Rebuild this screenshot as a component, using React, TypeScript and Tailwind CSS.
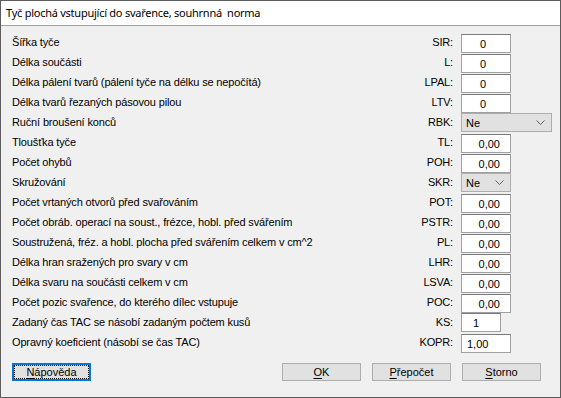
import React from "react";

type Row = {
  label: string;
  code: string;
  kind: "c" | "r" | "combo" | "comboSmall" | "ks" | "kopr";
  value: string;
};

const rows: Row[] = [
  { label: "Šířka tyče", code: "SIR:", kind: "c", value: "0" },
  { label: "Délka součásti", code: "L:", kind: "c", value: "0" },
  { label: "Délka pálení tvarů (pálení tyče na délku se nepočítá)", code: "LPAL:", kind: "c", value: "0" },
  { label: "Délka tvarů řezaných pásovou pilou", code: "LTV:", kind: "c", value: "0" },
  { label: "Ruční broušení konců", code: "RBK:", kind: "combo", value: "Ne" },
  { label: "Tloušťka tyče", code: "TL:", kind: "r", value: "0,00" },
  { label: "Počet ohybů", code: "POH:", kind: "r", value: "0,00" },
  { label: "Skružování", code: "SKR:", kind: "comboSmall", value: "Ne" },
  { label: "Počet vrtaných otvorů před svařováním", code: "POT:", kind: "r", value: "0,00" },
  { label: "Počet obráb. operací na soust., frézce, hobl. před svářením", code: "PSTR:", kind: "r", value: "0,00" },
  { label: "Soustružená, fréz. a hobl. plocha před svářením celkem v cm^2", code: "PL:", kind: "r", value: "0,00" },
  { label: "Délka hran sražených pro svary v cm", code: "LHR:", kind: "r", value: "0,00" },
  { label: "Délka svaru na součásti celkem v cm", code: "LSVA:", kind: "r", value: "0,00" },
  { label: "Počet pozic svařence, do kterého dílec vstupuje", code: "POC:", kind: "r", value: "0,00" },
  { label: "Zadaný čas TAC se násobí zadaným počtem kusů", code: "KS:", kind: "ks", value: "1" },
  { label: "Opravný koeficient (násobí se čas TAC)", code: "KOPR:", kind: "kopr", value: "1,00" },
];

function Chevron() {
  return (
    <svg width="9" height="6" viewBox="0 0 9 6" className="shrink-0">
      <polyline points="0.5,0.5 4.5,4.5 8.5,0.5" fill="none" stroke="#606060" strokeWidth="1" />
    </svg>
  );
}

function Field({ r }: { r: Row }) {
  const box = "h-[19px] bg-white border border-[#a0a0a0] border-t-[#7a7a7a] flex items-center text-[11px]";
  if (r.kind === "combo" || r.kind === "comboSmall") {
    return (
      <div
        className={`mt-[1px] h-[19px] ${r.kind === "combo" ? "w-[91px]" : "w-[50px]"} bg-[#e1e1e1] border border-[#adadad] flex items-center justify-between pl-[4px] pr-[6px] text-[11px]`}
      >
        <span className="pt-[2px]">{r.value}</span>
        <Chevron />
      </div>
    );
  }
  if (r.kind === "c") {
    return (
      <div className={`mt-[2px] w-[50px] ${box} pl-[18px]`}>
        <span className="pt-[2px]">{r.value}</span>
      </div>
    );
  }
  if (r.kind === "r") {
    return (
      <div className={`mt-[2px] w-[50px] ${box} justify-end pr-[10px]`}>
        <span className="pt-[2px]">{r.value}</span>
      </div>
    );
  }
  if (r.kind === "ks") {
    return (
      <div className={`mt-[1px] w-[40px] ${box} pl-[11px]`}>
        <span className="pt-[2px]">{r.value}</span>
      </div>
    );
  }
  return (
    <div className={`mt-[2px] w-[50px] ${box} pl-[5px]`}>
      <span className="pt-[2px]">{r.value}</span>
    </div>
  );
}

function Btn({ u, rest, focused }: { u: string; rest: string; focused?: boolean }) {
  if (focused) {
    return (
      <div className="w-[79px] h-[18px] bg-[#e1e1e1] border-2 border-[#0078d7] flex items-center justify-center p-[1px]">
        <div className="w-full h-full outline outline-1 outline-dotted outline-black flex items-center justify-center text-[11px] leading-none">
          <span className="underline underline-offset-[2px]">{u}</span>
          <span>{rest}</span>
        </div>
      </div>
    );
  }
  return (
    <div className="w-[79px] h-[18px] bg-[#e1e1e1] border border-[#adadad] flex items-center justify-center text-[11px] leading-none">
      <span className="underline underline-offset-[2px]">{u}</span>
      <span>{rest}</span>
    </div>
  );
}

export default function App() {
  return (
    <div
      className="w-[561px] h-[398px] bg-[#f0f0f0] border border-[#5c5c5c] flex flex-col text-black overflow-hidden"
      style={{ fontFamily: '"Liberation Sans", Arial, sans-serif' }}
    >
      <div
        className="h-[25px] bg-white border-b border-[#a0a0a0] flex items-center pl-[5px] text-[11px] shrink-0"
        style={{ fontFamily: '"Noto Sans", "Liberation Sans", sans-serif' }}
      >
        <span className="whitespace-pre tracking-[-0.25px]">Tyč plochá vstupující do svařence, souhrnná  norma</span>
      </div>
      <div className="flex flex-col pt-[6px] pl-[11px]">
        {rows.map((r) => (
          <div key={r.code} className="flex h-[20px] items-start">
            <div className="w-[400px] text-[11px] leading-[20px] whitespace-nowrap tracking-[-0.15px]">{r.label}</div>
            <div className="w-[41px] text-[11px] leading-[20px] text-right tracking-[-0.15px]">{r.code}</div>
            <div className="ml-[8px]">
              <Field r={r} />
            </div>
          </div>
        ))}
      </div>
      <div className="flex pl-[11px] mt-[11px]">
        <Btn u="N" rest="ápověda" focused />
        <div className="ml-[191px] flex gap-[11px]">
          <Btn u="O" rest="K" />
          <Btn u="P" rest="řepočet" />
          <Btn u="S" rest="torno" />
        </div>
      </div>
    </div>
  );
}
